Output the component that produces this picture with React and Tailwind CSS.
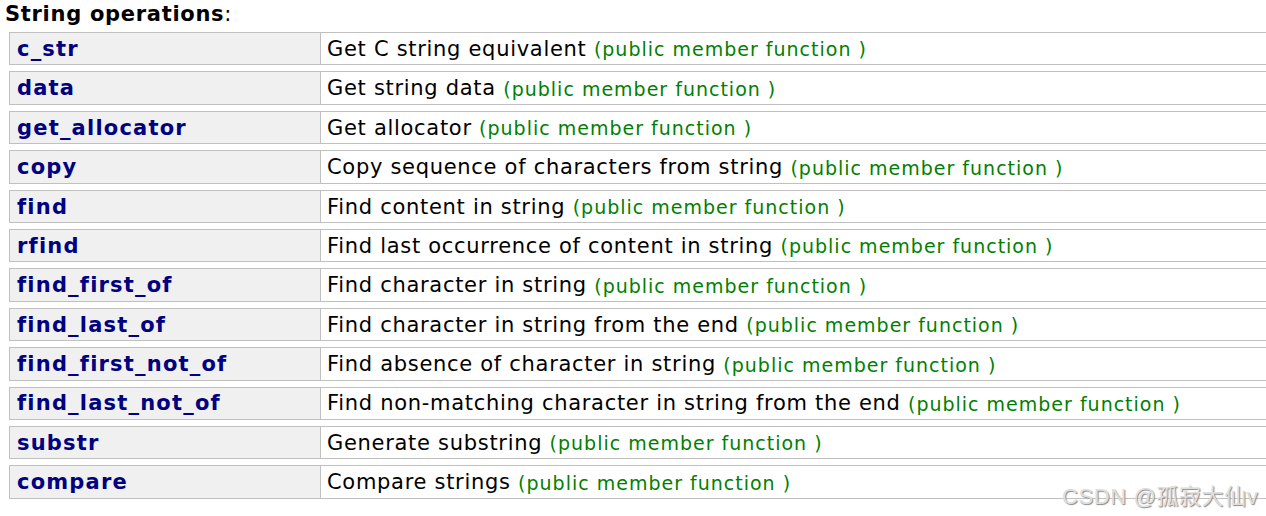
const rows = [
  ['c_str', 'Get C string equivalent'],
  ['data', 'Get string data'],
  ['get_allocator', 'Get allocator'],
  ['copy', 'Copy sequence of characters from string'],
  ['find', 'Find content in string'],
  ['rfind', 'Find last occurrence of content in string'],
  ['find_first_of', 'Find character in string'],
  ['find_last_of', 'Find character in string from the end'],
  ['find_first_not_of', 'Find absence of character in string'],
  ['find_last_not_of', 'Find non-matching character in string from the end'],
  ['substr', 'Generate substring'],
  ['compare', 'Compare strings'],
];

export default function App() {
  return (
    <div className="relative w-[1266px] h-[516px] overflow-hidden bg-white text-black font-['DejaVu_Sans',sans-serif] text-[21px]">
      <div className="pl-[5px] pt-[1px] h-[32px] leading-[26px]">
        <b className="tracking-[0.7px]">String operations</b>:
      </div>
      <div className="flex flex-col gap-[6px] pl-[9px] w-[1400px]">
        {rows.map(([name, desc]) => (
          <div key={name} className="flex h-[33.4px] border border-[#c0c0c0]">
            <div className="w-[311px] shrink-0 bg-[#f0f0f0] border-r border-[#c0c0c0] pl-[7px] pt-[2px] flex items-center font-bold text-[#000080] tracking-[1.2px]">
              {name}
            </div>
            <div className="flex-1 pl-[6px] pt-[2px] flex items-center whitespace-nowrap tracking-[0.7px]">
              {desc}&nbsp;<span className="text-[#008000] text-[19px] tracking-[1px]">(public member function )</span>
            </div>
          </div>
        ))}
      </div>
      <div className="absolute left-[1062px] top-[486px] leading-none text-[22px] tracking-[0.6px] text-[#dedede] font-['Liberation_Sans','Noto_Sans_CJK_SC',sans-serif] [text-shadow:1px_1px_1px_#8a8a8a]">
        CSDN @孤寂大仙v
      </div>
    </div>
  );
}
